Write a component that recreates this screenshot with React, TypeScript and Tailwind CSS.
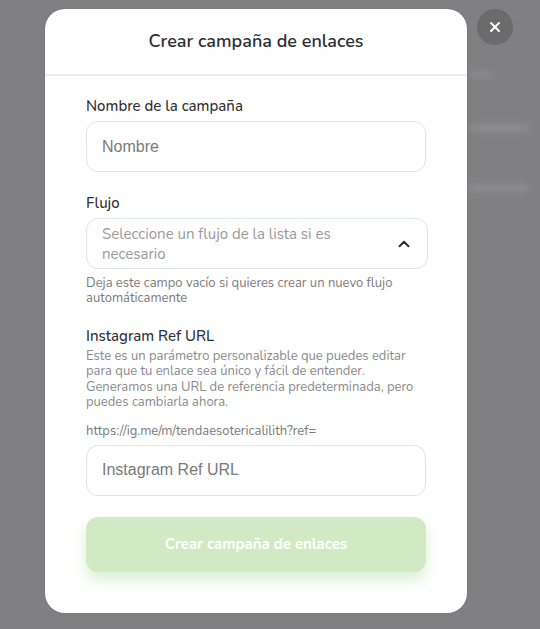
import { ChevronUp, X } from "lucide-react";

const ui = { fontFamily: '"Nunito", "Lato", "Noto Sans", sans-serif' };

export default function App() {
  return (
    <div className="relative h-[629px] w-[540px] overflow-hidden bg-[#808082]" style={ui}>
      {/* blurred page behind the overlay */}
      <div className="absolute inset-0 blur-[3px]">
        <div className="absolute left-[470px] top-[71px] h-[7px] w-[22px] rounded bg-[#8a8a8c]" />
        <div className="absolute left-[468px] top-[124px] h-[8px] w-[62px] rounded bg-[#8b8b8d]" />
        <div className="absolute left-[468px] top-[184px] h-[8px] w-[62px] rounded bg-[#8b8b8d]" />
      </div>

      <div className="relative flex justify-start pl-[45px] pt-[9px]">
        <div className="w-[422px] rounded-[20px] bg-white shadow-[0_0_2px_rgba(0,0,0,0.15)]">
          <div className="flex h-[67px] items-center justify-center border-b-2 border-[#e8ecf1]">
            <h2 className="text-[18px] font-semibold text-[#2d2f33]">Crear campaña de enlaces</h2>
          </div>

          <div className="px-[41px] pb-[41px] pt-[19px]">
            <label className="block text-[15px] font-medium leading-[22px] text-[#2f3033]">Nombre de la campaña</label>
            <div className="mt-[4px] flex h-[51px] items-center rounded-[12px] border border-[#dfe4ea] px-[15px]">
              <span className="text-[16px] text-[#7a7a7a]" style={{ fontFamily: '"Liberation Sans", Arial, sans-serif' }}>
                Nombre
              </span>
            </div>

            <label className="mt-[20px] block text-[15px] font-medium leading-[22px] text-[#2f3033]">Flujo</label>
            <div className="mt-[4px] flex h-[51px] w-[342px] items-center justify-between rounded-[12px] border border-[#dfe4ea] pl-[15px] pr-[14px]">
              <span className="w-[250px] text-[15px] leading-[20px] text-[#9a9a9c]">
                Seleccione un flujo de la lista si es necesario
              </span>
              <ChevronUp size={18} strokeWidth={2.6} className="text-[#2d2f33]" />
            </div>
            <p className="mt-[7px] text-[13px] leading-[15px] text-[#7b7b7d]">
              Deja este campo vacío si quieres crear un nuevo flujo automáticamente
            </p>

            <label className="mt-[19px] block text-[15px] font-medium leading-[22px] text-[#2f3033]">Instagram Ref URL</label>
            <p className="mt-[2px] text-[13px] leading-[15.4px] text-[#8a8a8c]">
              Este es un parámetro personalizable que puedes editar para que tu enlace sea único y fácil de entender.
              Generamos una URL de referencia predeterminada, pero puedes cambiarla ahora.
            </p>
            <p className="mt-[13px] text-[13px] leading-[15px] text-[#7b7b7d]">https://ig.me/m/tendaesotericalilith?ref=</p>
            <div className="mt-[6px] flex h-[51px] items-center rounded-[12px] border border-[#dfe4ea] px-[15px]">
              <span className="text-[16px] text-[#7a7a7a]" style={{ fontFamily: '"Liberation Sans", Arial, sans-serif' }}>
                Instagram Ref URL
              </span>
            </div>

            <button
              type="button"
              className="mt-[21px] flex h-[55px] w-full items-center justify-center rounded-[12px] bg-[#d2eac4] text-[15px] font-bold text-white shadow-[0_8px_14px_rgba(150,210,130,0.35)]"
            >
              Crear campaña de enlaces
            </button>
          </div>
        </div>

        <button
          type="button"
          aria-label="Close"
          className="ml-[10px] mt-0 flex h-[36px] w-[36px] items-center justify-center rounded-full bg-[#6b6b6c] text-white"
        >
          <X size={16} strokeWidth={3} />
        </button>
      </div>
    </div>
  );
}
